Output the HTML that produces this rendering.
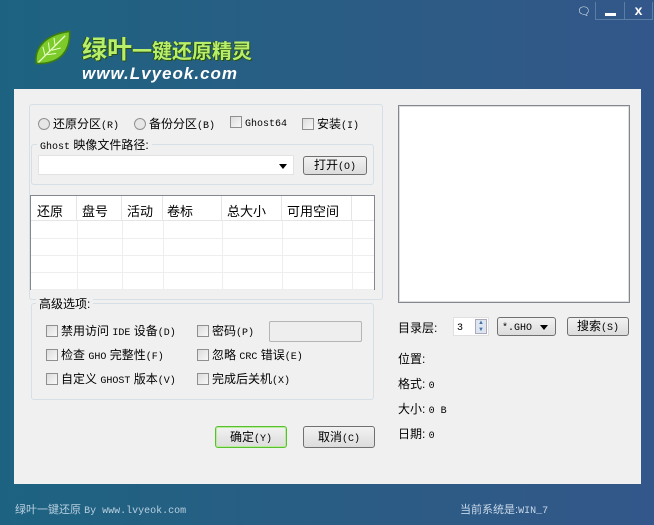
<!DOCTYPE html><html><head><meta charset="utf-8"><style>
*{margin:0;padding:0;box-sizing:border-box}
body{width:654px;height:525px;overflow:hidden;font-family:"Liberation Sans","Noto Sans CJK SC",sans-serif;font-size:12px;color:#000;background:linear-gradient(90deg,#1d6381,#2a5d84 50%,#33578a);position:relative}
.a{position:absolute;white-space:nowrap}
.panel{position:absolute;left:14px;top:89px;width:627px;height:395px;background:#f0f0f0}
.grp{position:absolute;border:1px solid #d5dfe5;border-radius:3px}
.cb{display:inline-block;width:12px;height:12px;border:1px solid #8f8f8f;background:linear-gradient(135deg,#dcdcdc,#f8f8f8);vertical-align:-2px;margin-right:3px}
.rb{display:inline-block;width:12px;height:12px;border:1px solid #8f8f8f;border-radius:50%;background:#e6e6e6;vertical-align:-2px;margin-right:3px}
.btn{position:absolute;border:1px solid #707070;border-radius:3px;background:linear-gradient(#f2f2f2,#dcdcdc);text-align:center;font-size:12px}
.mono{font-family:"Liberation Mono","Noto Sans CJK SC",monospace;font-size:10px}
table{border-collapse:collapse}
td{border-right:1px solid #eee;border-bottom:1px solid #eee;height:17px}
</style></head><body>
<div class="a" style="left:34px;top:28px;width:40px;height:40px">
<svg width="40" height="40" viewBox="0 0 36 36"><path d="M2 32 C0 18 10 6 32 3 C33 20 24 32 4 32Z" fill="#7ccb2a" stroke="#3e7d12" stroke-width="1.5"/><path d="M4 31 L28 7" stroke="#e8ffc8" stroke-width="1.2"/><path d="M10 25 L8 17 M14 21 L13 13 M19 16 L18 9 M12 24 L20 23 M16 20 L24 18" stroke="#e8ffc8" stroke-width="0.9"/></svg></div>
<div class="a" style="left:82px;top:30px;font-size:25px;font-weight:bold;color:#b8ef6a;text-shadow:1px 1px 0 #2a5010,-1px 0 0 #2a5010">绿叶<span style="font-size:20px">一键还原精灵</span></div>
<div class="a" style="left:82px;top:64px;font-size:17px;font-weight:bold;font-style:italic;color:#fff;letter-spacing:1px">www.Lvyeok.com</div>
<div class="a" style="left:577px;top:5px;color:#fff;font-size:11px">🗨</div>
<div class="a" style="left:595px;top:2px;width:30px;height:18px;border:1px solid #5a7ea4;border-top:none"><div style="position:absolute;left:9px;top:11px;width:11px;height:3px;background:#fff"></div></div>
<div class="a" style="left:625px;top:2px;width:28px;height:18px;border:1px solid #5a7ea4;border-top:none;border-left:none;color:#fff;font-weight:bold;text-align:center;font-size:14px;line-height:16px">x</div>
<div class="panel"></div>
<div class="grp" style="left:29px;top:104px;width:354px;height:196px"></div>
<div class="a" style="left:38px;top:115px"><span class="rb"></span>还原分区<span class="mono">(R)</span></div>
<div class="a" style="left:134px;top:115px"><span class="rb"></span>备份分区<span class="mono">(B)</span></div>
<div class="a" style="left:230px;top:115px"><span class="cb"></span><span class="mono">Ghost64</span></div>
<div class="a" style="left:302px;top:115px"><span class="cb"></span>安装<span class="mono">(I)</span></div>
<div class="grp" style="left:31px;top:144px;width:343px;height:41px"></div>
<div class="a" style="left:37px;top:136px;background:#f0f0f0;padding:0 3px"><span class="mono">Ghost</span> 映像文件路径:</div>
<div class="a" style="left:38px;top:155px;width:256px;height:20px;background:#fff;border:1px solid #e3e3e3"><div style="position:absolute;right:6px;top:8px;border:4px solid transparent;border-top:5px solid #000"></div></div>
<div class="btn" style="left:303px;top:156px;width:64px;height:19px;line-height:17px">打开<span class="mono">(O)</span></div>
<div class="a" style="left:30px;top:195px;width:345px;height:95px;border:1px solid #828790;background:#fff">
<div style="height:25px;border-bottom:1px solid #e5e5e5;position:relative;font-size:13px">
<span class="a" style="left:6px;top:5px">还原</span><span class="a" style="left:51px;top:5px">盘号</span><span class="a" style="left:96px;top:5px">活动</span><span class="a" style="left:136px;top:5px">卷标</span><span class="a" style="left:196px;top:5px">总大小</span><span class="a" style="left:256px;top:5px">可用空间</span>
<div class="a" style="left:45px;top:0;width:1px;height:25px;background:#e5e5e5"></div><div class="a" style="left:90px;top:0;width:1px;height:25px;background:#e5e5e5"></div><div class="a" style="left:131px;top:0;width:1px;height:25px;background:#e5e5e5"></div><div class="a" style="left:190px;top:0;width:1px;height:25px;background:#e5e5e5"></div><div class="a" style="left:250px;top:0;width:1px;height:25px;background:#e5e5e5"></div><div class="a" style="left:320px;top:0;width:1px;height:25px;background:#e5e5e5"></div></div>
<table><tr><td style="width:46px"></td><td style="width:45px"></td><td style="width:41px"></td><td style="width:59px"></td><td style="width:60px"></td><td style="width:70px"></td><td style="width:22px;border-right:none"></td></tr>
<tr><td></td><td></td><td></td><td></td><td></td><td></td><td style="border-right:none"></td></tr>
<tr><td></td><td></td><td></td><td></td><td></td><td></td><td style="border-right:none"></td></tr>
<tr><td></td><td></td><td></td><td></td><td></td><td></td><td style="border-right:none"></td></tr></table></div>
<div class="grp" style="left:31px;top:303px;width:343px;height:97px"></div>
<div class="a" style="left:36px;top:295px;background:#f0f0f0;padding:0 3px">高级选项:</div>
<div class="a" style="left:46px;top:322px"><span class="cb"></span>禁用访问 <span class="mono">IDE</span> 设备<span class="mono">(D)</span></div>
<div class="a" style="left:197px;top:322px"><span class="cb"></span>密码<span class="mono">(P)</span></div>
<div class="a" style="left:269px;top:321px;width:93px;height:21px;border:1px solid #b5b5b5;border-radius:2px;background:#eee"></div>
<div class="a" style="left:46px;top:346px"><span class="cb"></span>检查 <span class="mono">GHO</span> 完整性<span class="mono">(F)</span></div>
<div class="a" style="left:197px;top:346px"><span class="cb"></span>忽略 <span class="mono">CRC</span> 错误<span class="mono">(E)</span></div>
<div class="a" style="left:46px;top:370px"><span class="cb"></span>自定义 <span class="mono">GHOST</span> 版本<span class="mono">(V)</span></div>
<div class="a" style="left:197px;top:370px"><span class="cb"></span>完成后关机<span class="mono">(X)</span></div>
<div class="btn" style="left:215px;top:426px;width:72px;height:22px;line-height:20px;border:1px solid #58c030;box-shadow:inset 0 0 0 1px #b8ec98">确定<span class="mono">(Y)</span></div>
<div class="btn" style="left:303px;top:426px;width:72px;height:22px;line-height:20px">取消<span class="mono">(C)</span></div>
<div class="a" style="left:398px;top:105px;width:232px;height:198px;border:1px solid #828790;background:#fff;box-shadow:inset 0 0 0 1px #ddd"></div>
<div class="a" style="left:398px;top:319px">目录层:</div>
<div class="a" style="left:453px;top:317px;width:36px;height:19px;background:#fff;border:1px solid #e0e0e0;padding:1px 3px" ><span class="mono">3</span><div style="position:absolute;right:1px;top:1px;width:12px;height:15px;border:1px solid #aab;background:#dde6f0;font-size:6px;line-height:7px;text-align:center;color:#4a6fa5">▲<br>▼</div></div>
<div class="btn" style="left:497px;top:317px;width:59px;height:19px;line-height:17px;text-align:left;padding-left:4px"><span class="mono">*.GHO</span><div style="position:absolute;right:7px;top:7px;border:4px solid transparent;border-top:5px solid #000"></div></div>
<div class="btn" style="left:567px;top:317px;width:62px;height:19px;line-height:17px">搜索<span class="mono">(S)</span></div>
<div class="a" style="left:398px;top:350px">位置:</div>
<div class="a" style="left:398px;top:375px">格式: <span class="mono">0</span></div>
<div class="a" style="left:398px;top:400px">大小: <span class="mono">0 B</span></div>
<div class="a" style="left:398px;top:425px">日期: <span class="mono">0</span></div>
<div class="a" style="left:15px;top:501px;color:#b8cfe0;font-size:11px">绿叶一键还原 <span class="mono" style="color:#b8cfe0">By www.lvyeok.com</span></div>
<div class="a" style="left:460px;top:501px;color:#c8d8e8;font-size:11px">当前系统是:<span class="mono">WIN_7</span></div>
</body></html>
